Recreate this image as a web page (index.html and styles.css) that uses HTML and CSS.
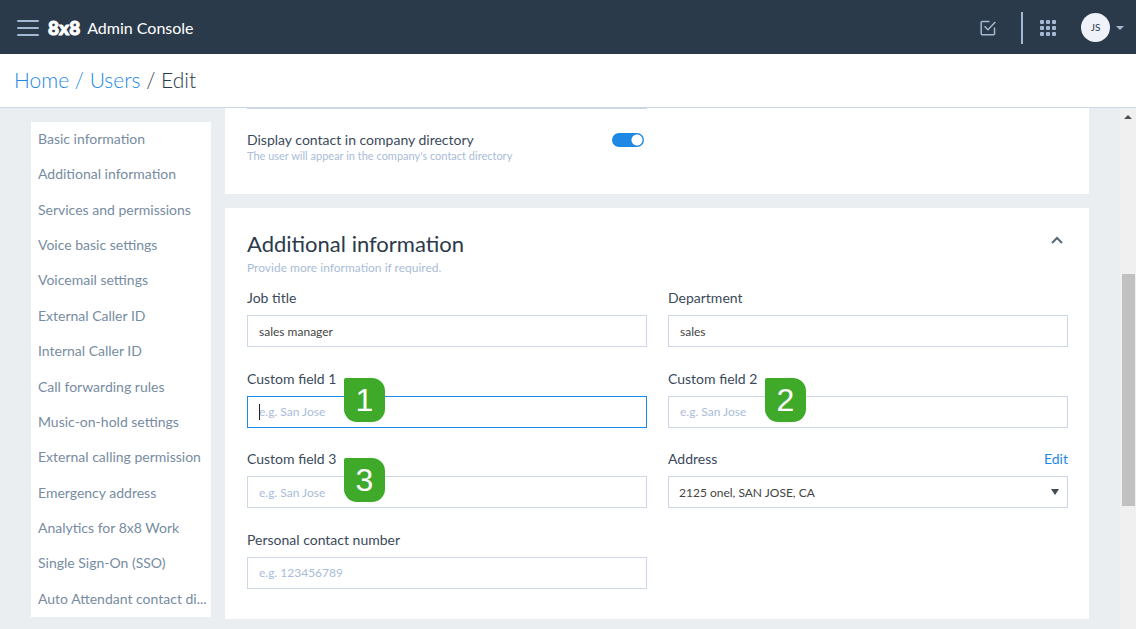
FILE: index.html
```html
<!DOCTYPE html>
<html lang="en">
  <head>
    <meta charset="UTF-8" />
    <meta name="viewport" content="width=device-width, initial-scale=1.0" />
    <title>8x8 Admin Console</title>
    <link rel="stylesheet" href="styles.css">
  </head>
  <body>
    <header class="topbar">
      <button class="icon-btn" aria-label="Menu">
        <svg width="22" height="18" viewBox="0 0 22 18" fill="none" stroke="#a3b8d3" stroke-width="2" stroke-linecap="round">
          <path d="M1 2h20M1 9h20M1 16h20" />
        </svg>
      </button>
      <span class="logo">8x8</span>
      <span class="app-name">Admin Console</span>
      <div class="topbar-right">
        <button class="icon-btn" aria-label="Tasks">
          <svg width="16" height="16" viewBox="0 0 16 16" fill="none" stroke="#a3b8d3" stroke-width="1.5">
            <path d="M9.5 1.5H2.2a1 1 0 0 0-1 1v11.3a1 1 0 0 0 1 1h11.3a1 1 0 0 0 1-1V7.5" />
            <path d="M4.5 6.2L8 9.7L15.3 2" />
          </svg>
        </button>
        <span class="divider"></span>
        <button class="icon-btn" aria-label="Apps">
          <svg width="18" height="18" viewBox="0 0 18 18" fill="#a3b8d3">
            <rect x="1" y="1" width="4" height="4" rx="1" />
            <rect x="7" y="1" width="4" height="4" rx="1" />
            <rect x="13" y="1" width="4" height="4" rx="1" />
            <rect x="1" y="7" width="4" height="4" rx="1" />
            <rect x="7" y="7" width="4" height="4" rx="1" />
            <rect x="13" y="7" width="4" height="4" rx="1" />
            <rect x="1" y="13" width="4" height="4" rx="1" />
            <rect x="7" y="13" width="4" height="4" rx="1" />
            <rect x="13" y="13" width="4" height="4" rx="1" />
          </svg>
        </button>
        <button class="account" aria-label="Account">
          <span class="avatar">JS</span>
          <svg width="8" height="4" viewBox="0 0 8 4" fill="#a3b8d3"><path d="M0 0h8L4 4z" /></svg>
        </button>
      </div>
    </header>

    <nav class="breadcrumb">
      <a href="#">Home /</a>
      <a href="#">Users</a>
      <span>/ Edit</span>
    </nav>

    <div class="page">
      <!-- Section links -->
      <nav class="sidebar">
        <a href="#">Basic information</a>
        <a href="#">Additional information</a>
        <a href="#">Services and permissions</a>
        <a href="#">Voice basic settings</a>
        <a href="#">Voicemail settings</a>
        <a href="#">External Caller ID</a>
        <a href="#">Internal Caller ID</a>
        <a href="#">Call forwarding rules</a>
        <a href="#">Music-on-hold settings</a>
        <a href="#">External calling permission</a>
        <a href="#">Emergency address</a>
        <a href="#">Analytics for 8x8 Work</a>
        <a href="#">Single Sign-On (SSO)</a>
        <a href="#">Auto Attendant contact di...</a>
      </nav>

      <main class="content">
        <!-- Basic information, last rows -->
        <section class="card card-basic">
          <div class="directory">
            <div>
              <label class="directory-label" for="directory">Display contact in company directory</label>
              <p class="hint hint-small">The user will appear in the company's contact directory</p>
            </div>
            <input class="switch" type="checkbox" id="directory" checked />
          </div>
        </section>

        <!-- Additional information -->
        <section class="card card-additional">
          <div class="card-head">
            <h2>Additional information</h2>
            <button class="collapse" aria-label="Collapse">
              <svg width="12" height="8" viewBox="0 0 12 8" fill="none" stroke="#5a6875" stroke-width="2">
                <path d="M1 7l5-5l5 5" />
              </svg>
            </button>
          </div>
          <p class="hint">Provide more information if required.</p>

          <form class="fields">
            <div class="field">
              <label for="job">Job title</label>
              <input type="text" id="job" value="sales manager" />
            </div>
            <div class="field">
              <label for="department">Department</label>
              <input type="text" id="department" value="sales" />
            </div>
            <div class="field active">
              <label for="custom1">Custom field 1</label>
              <input type="text" id="custom1" placeholder="e.g. San Jose" />
              <span class="caret"></span>
              <span class="badge">1</span>
            </div>
            <div class="field">
              <label for="custom2">Custom field 2</label>
              <input type="text" id="custom2" placeholder="e.g. San Jose" />
              <span class="badge">2</span>
            </div>
            <div class="field">
              <label for="custom3">Custom field 3</label>
              <input type="text" id="custom3" placeholder="e.g. San Jose" />
              <span class="badge">3</span>
            </div>
            <div class="field">
              <div class="label-row">
                <label for="address">Address</label>
                <a href="#">Edit</a>
              </div>
              <div class="select-wrap">
                <select id="address">
                  <option>2125 onel, SAN JOSE, CA</option>
                </select>
                <svg class="arrow" width="8" height="6" viewBox="0 0 8 6" fill="#3f4a55"><path d="M0 0h8L4 6z" /></svg>
              </div>
            </div>
            <div class="field">
              <label for="phone">Personal contact number</label>
              <input type="text" id="phone" placeholder="e.g. 123456789" />
            </div>
          </form>
        </section>
      </main>

      <div class="scrollbar">
        <svg width="8" height="4" viewBox="0 0 8 4" fill="#505050"><path d="M0 4h8L4 0z" /></svg>
        <div class="thumb"></div>
      </div>
    </div>
  </body>
</html>
```

FILE: styles.css
```css
* {
  margin: 0;
  padding: 0;
  box-sizing: border-box;
}
body {
  display: flex;
  flex-direction: column;
  min-height: 100vh;
  background: #eaeef1;
  color: #2b3a4a;
  font-family: Lato, "Open Sans", sans-serif;
  font-size: 14px;
  line-height: 20px;
}
a {
  color: #1e88e5;
  text-decoration: none;
}
button {
  border: none;
  background: none;
  font-family: inherit;
  cursor: pointer;
}
svg {
  display: block;
}

/* Top bar */
.topbar {
  display: flex;
  align-items: center;
  height: 54px;
  padding: 1px 12px 0 17px;
  background: #2b3a4a;
  color: #fff;
}
.logo {
  margin: 0 7px 0 9px;
  font-size: 19px;
  font-weight: 900;
  -webkit-text-stroke: 1px #fff;
}
.app-name {
  font-size: 16px;
}
.topbar-right {
  display: flex;
  align-items: center;
  margin-left: auto;
}
.divider {
  width: 2px;
  height: 32px;
  margin: 0 16px 0 25px;
  background: #a3b8d3;
}
.account {
  display: flex;
  align-items: center;
  gap: 6px;
  margin-left: 24px;
}
.avatar {
  width: 29px;
  height: 29px;
  border-radius: 50%;
  background: #eff2f8;
  color: #2b3a4a;
  font-size: 10px;
  line-height: 28px;
}

/* Breadcrumb */
.breadcrumb {
  height: 54px;
  padding: 0 14px;
  border-bottom: 1px solid #cdd7e3;
  background: #fff;
  font-size: 21px;
  font-weight: 300;
  line-height: 52px;
}

/* Page body */
.page {
  display: flex;
  flex: 1;
}
.sidebar {
  display: flex;
  flex-direction: column;
  flex: none;
  width: 180px;
  margin: 14px 14px 12px 31px;
  padding-left: 7px;
  background: #fff;
}
.sidebar a {
  flex: 1;
  color: #778ca2;
  line-height: 34px;
  white-space: nowrap;
}
.content {
  display: flex;
  flex-direction: column;
  flex: 1;
  gap: 14px;
  margin: 0 31px 10px 0;
}
.card {
  padding: 0 21px 0 22px;
  background: #fff;
}
.card-basic {
  padding-bottom: 32px;
}
.directory {
  display: flex;
  align-items: flex-start;
  justify-content: space-between;
  max-width: calc(50% - 11px);
  padding: 21px 3px 0 0;
  border-top: 1px solid #cdd7e6;
}
.directory-label,
.field label {
  display: block;
  color: #3b4a5a;
}
.hint {
  color: #a9bcd8;
  font-size: 12px;
  line-height: 12px;
}
.hint-small {
  font-size: 11px;
}
.switch {
  width: 32px;
  height: 14px;
  margin-top: 3px;
  border-radius: 7px;
  background: radial-gradient(circle at 25px 7px, #fff 5px, #1e88e5 6px);
  appearance: none;
  cursor: pointer;
}

/* Additional information card */
.card-additional {
  display: flex;
  flex: 1;
  flex-direction: column;
  padding-top: 21px;
  padding-bottom: 30px;
}
.card-head {
  display: flex;
  align-items: flex-start;
  justify-content: space-between;
  padding-bottom: 3px;
}
h2 {
  font-size: 22px;
  font-weight: 400;
  line-height: 30px;
}
.collapse {
  padding: 7px 5px;
}
.fields {
  display: grid;
  grid-template-columns: 1fr 1fr;
  flex: 1;
  align-content: space-between;
  column-gap: 21px;
  margin-top: 14px;
}
.field {
  position: relative;
}
.field input,
.field select {
  display: block;
  width: 100%;
  height: 32px;
  margin-top: 7px;
  padding: 0 11px;
  border: 1px solid #cdd7e6;
  border-radius: 0;
  outline: none;
  background: #fff;
  color: #444;
  font-family: inherit;
  font-size: 12px;
}
.field select {
  padding: 0 10px;
  appearance: none;
}
.field input::placeholder {
  color: #a9bcd8;
}
.field.active input,
.field input:focus {
  border-color: #1e88e5;
}
.caret {
  position: absolute;
  bottom: 8px;
  left: 12px;
  width: 1px;
  height: 16px;
  background: #222;
}
.badge {
  position: absolute;
  top: 9px;
  left: 97px;
  width: 41px;
  height: 44px;
  border-radius: 2px 13px 13px 13px;
  background: #3faa2a;
  color: #fff;
  font-family: "Liberation Sans", Arial, sans-serif;
  font-size: 32px;
  line-height: 45px;
  text-align: center;
}
.label-row {
  display: flex;
  justify-content: space-between;
}
.select-wrap {
  position: relative;
}
.arrow {
  position: absolute;
  top: 13px;
  right: 9px;
  pointer-events: none;
}

/* Scroll bar */
.scrollbar {
  display: flex;
  flex-direction: column;
  align-items: center;
  width: 16px;
  padding-top: 7px;
  background: #f0f0f0;
}
.thumb {
  width: 13px;
  height: 232px;
  margin-top: 155px;
  background: #c1c1c1;
}
```
